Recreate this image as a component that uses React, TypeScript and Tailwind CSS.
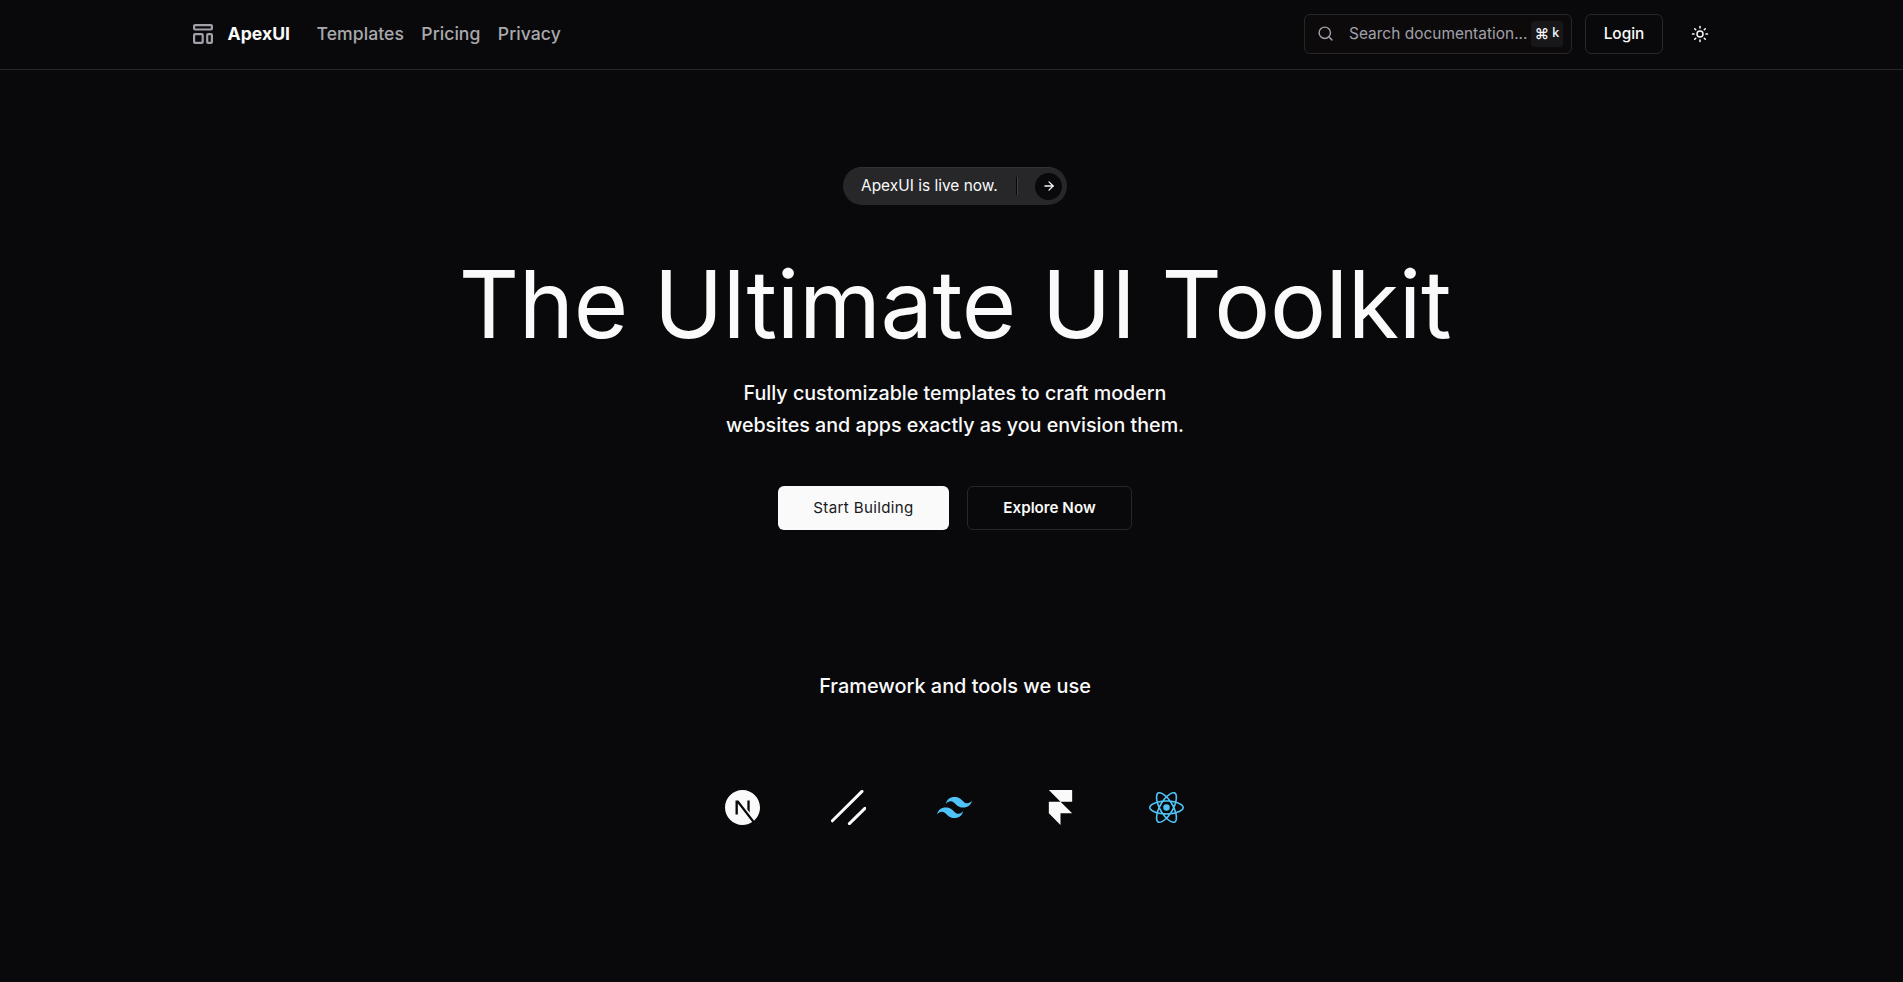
import { Search, ArrowRight, Sun } from "lucide-react";
import { SiNextdotjs, SiTailwindcss, SiFramer, SiReact } from "react-icons/si";

function LogoMark() {
  return (
    <svg viewBox="0 0 20 20" className="size-5 shrink-0" fill="none" stroke="#a1a1aa" strokeWidth="2.2">
      <rect x="1.1" y="1.1" width="17.8" height="4.4" rx="1" />
      <rect x="1.1" y="10.1" width="8.6" height="8.8" rx="1" />
      <rect x="14.2" y="10.1" width="4.7" height="8.8" rx="1" />
    </svg>
  );
}

function SlashLogo() {
  return (
    <svg viewBox="0 0 35 35" className="size-[35px]" fill="none" stroke="#fafafa" strokeWidth="3" strokeLinecap="round">
      <path d="M1.4 30.8 31 1.4M18.4 33.6 33.9 18.4" />
    </svg>
  );
}

export default function App() {
  return (
    <div className="flex h-[982px] w-full flex-col overflow-hidden bg-[#09090b] font-['Inter',sans-serif] text-[#fafafa]">
      <header className="flex h-[70px] shrink-0 items-center border-b border-[#27272a] pb-[2px] pl-[193px] pr-[194px]">
        <LogoMark />
        <span className="ml-[14.6px] pt-px text-[17.6px] font-bold">ApexUI</span>
        <nav className="ml-[26.6px] flex gap-[17.4px] pt-px text-[17.6px] font-medium tracking-[0.04px] text-[#a9a9ad]">
          <a>Templates</a>
          <a>Pricing</a>
          <a>Privacy</a>
        </nav>
        <div className="ml-auto flex h-10 w-[268px] items-center rounded-md border border-[#27272a] bg-[#0c0a0b] pl-3 pr-2">
          <Search className="size-[17px] text-[#a1a1aa]" strokeWidth={2} />
          <span className="ml-[15px] whitespace-nowrap pt-px text-[15.4px] tracking-[0.04px] text-[#a1a1aa]">Search documentation...</span>
          <kbd className="ml-auto flex h-[26px] w-8 items-center justify-center gap-[3px] rounded bg-[#18181b] font-['Inter',sans-serif] text-[12.5px] font-medium">
            <span className="text-[14.4px]">⌘</span>
            <span>k</span>
          </kbd>
        </div>
        <button className="ml-[13px] h-10 w-[78px] rounded-md border border-[#27272a] pt-px text-[15.4px] font-medium">Login</button>
        <Sun className="ml-[28px] size-[18px]" />
      </header>
      <main className="flex flex-col items-center pl-[7px]">
        <div className="mt-[97px] flex h-[38px] w-[224px] items-center rounded-full border-t border-[#323235] bg-[#27272a] pb-px pl-[18px] pr-[5px] text-[15.4px] tracking-[0.03px]">
          <span className="whitespace-nowrap">ApexUI is live now.</span>
          <span className="ml-auto h-[18px] w-[2px] border-r border-[#3f3f46] bg-[#09090b]" />
          <span className="ml-[17px] flex size-[27px] items-center justify-center rounded-full bg-[#09090b]">
            <ArrowRight className="size-[14px]" strokeWidth={2.2} />
          </span>
        </div>
        <h1 className="mt-[49px] whitespace-nowrap text-[93.5px] leading-[100px] tracking-[-0.4px]">The Ultimate UI Toolkit</h1>
        <p className="mt-[23px] text-center text-[19.68px] font-medium leading-8">
          Fully customizable templates to craft modern
          <br />
          websites and apps exactly as you envision them.
        </p>
        <div className="mt-[45px] flex gap-[18px] text-[15.1px]">
          <button className="h-11 w-[171px] rounded-md bg-[#fafafa] tracking-[0.35px] text-[#18181b]">Start Building</button>
          <button className="h-11 w-[165px] rounded-md border border-[#27272a] text-[15.2px] font-semibold">Explore Now</button>
        </div>
        <h2 className="mt-[140px] text-[19.9px] font-medium leading-8">Framework and tools we use</h2>
        <div className="mr-[2px] mt-[88px] flex gap-[71px]">
          <SiNextdotjs className="size-[35px]" />
          <SlashLogo />
          <SiTailwindcss className="size-[35px] text-[#4fc3f7]" />
          <SiFramer className="size-[35px]" />
          <SiReact className="size-[35px] text-[#4fc3f7]" />
        </div>
      </main>
    </div>
  );
}
